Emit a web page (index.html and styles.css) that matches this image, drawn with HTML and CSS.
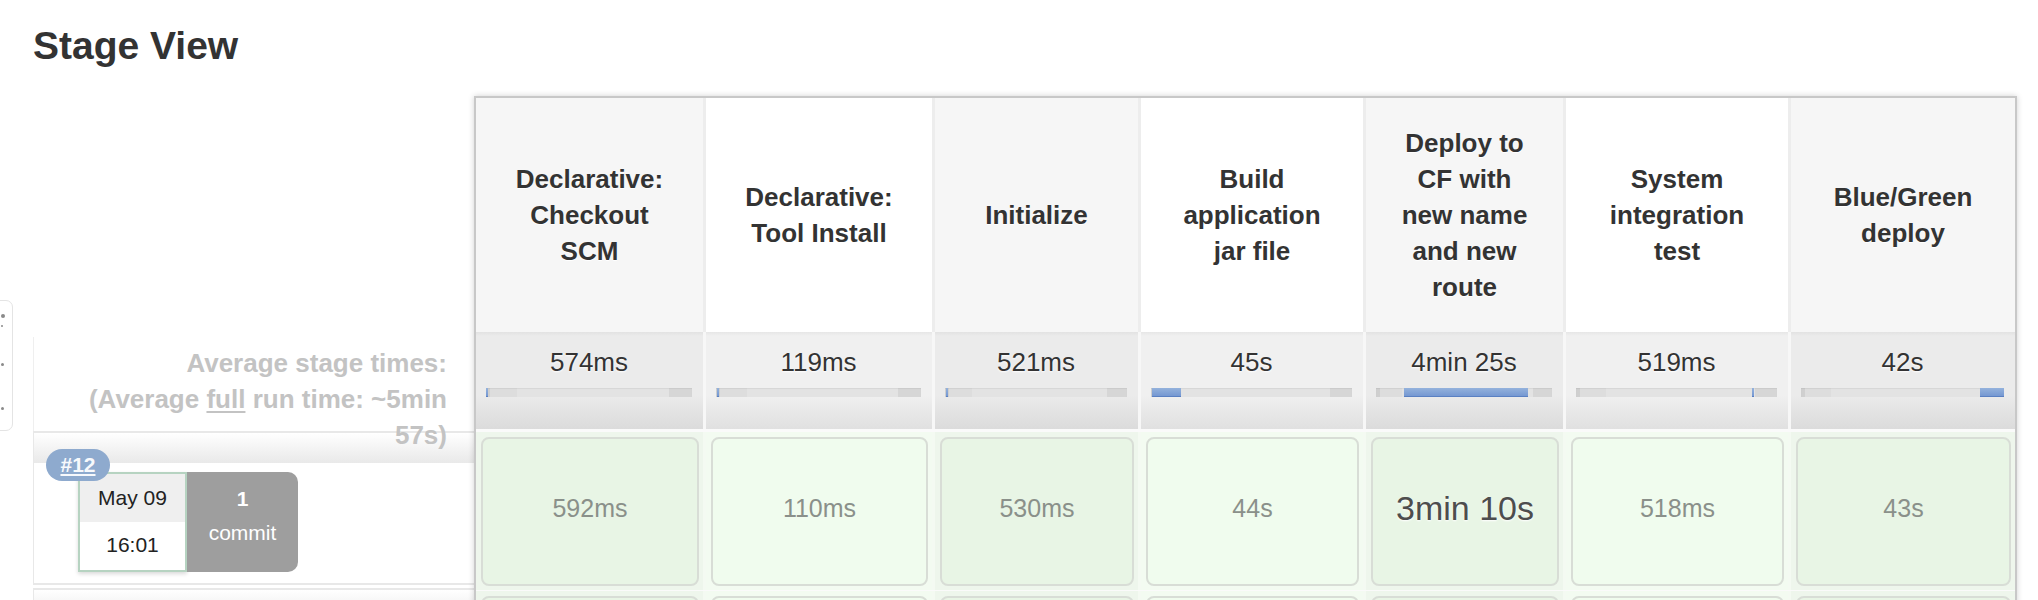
FILE: index.html
```html
<!DOCTYPE html>
<html>
<head>
<meta charset="utf-8">
<title>Stage View</title>
<link rel="stylesheet" href="styles.css">
</head>
<body>
<div class="handle">
  <span class="dot d1"></span><span class="dot d2"></span><span class="dot d3"></span><span class="dot d4"></span>
</div>
<div class="page">
  <h2 class="title">Stage View</h2>
  <div class="stage-view">
    <div class="labels">
      <div class="labels-head"></div>
      <div class="avg-label">Average stage times:<br>(Average <u>full</u> run time: ~5min 57s)</div>
      <div class="run">
        <div class="run-card">
          <div class="date">
            <div class="day">May 09</div>
            <div class="time">16:01</div>
          </div>
          <div class="commit"><b>1</b><span>commit</span></div>
          <a class="badge">#12</a>
        </div>
      </div>
      <div class="run"></div>
    </div>

    <div class="stages">
      <div class="row head">
        <div class="c">Declarative: Checkout SCM</div>
        <div class="c">Declarative: Tool Install</div>
        <div class="c">Initialize</div>
        <div class="c">Build application jar file</div>
        <div class="c">Deploy to CF with new name and new route</div>
        <div class="c">System integration test</div>
        <div class="c">Blue/Green deploy</div>
      </div>
      <div class="row avg">
        <div class="c">574ms<div class="bar"><span class="fill" style="left:0%;width:0.6%"></span></div></div>
        <div class="c">119ms<div class="bar"><span class="fill" style="left:0.3%;width:0.5%"></span></div></div>
        <div class="c">521ms<div class="bar"><span class="fill" style="left:0.6%;width:0.5%"></span></div></div>
        <div class="c">45s<div class="bar"><span class="fill" style="left:0.5%;width:14.5%"></span></div></div>
        <div class="c">4min 25s<div class="bar"><span class="fill" style="left:15.7%;width:70.8%"></span></div></div>
        <div class="c">519ms<div class="bar"><span class="fill" style="left:87.6%;width:0.6%"></span></div></div>
        <div class="c">42s<div class="bar"><span class="fill" style="left:88.3%;width:11.7%"></span></div></div>
      </div>
      <div class="row build">
        <div class="c"><div class="box">592ms</div></div>
        <div class="c"><div class="box">110ms</div></div>
        <div class="c"><div class="box">530ms</div></div>
        <div class="c"><div class="box">44s</div></div>
        <div class="c"><div class="box long">3min 10s</div></div>
        <div class="c"><div class="box">518ms</div></div>
        <div class="c"><div class="box">43s</div></div>
      </div>
      <div class="row build">
        <div class="c"><div class="box"></div></div>
        <div class="c"><div class="box"></div></div>
        <div class="c"><div class="box"></div></div>
        <div class="c"><div class="box"></div></div>
        <div class="c"><div class="box"></div></div>
        <div class="c"><div class="box"></div></div>
        <div class="c"><div class="box"></div></div>
      </div>
    </div>
  </div>
</div>
</body>
</html>
```

FILE: styles.css
```css
* { box-sizing: border-box; }
html, body { margin: 0; padding: 0; background: #fff; }
body {
  font-family: "Liberation Sans", Arial, Helvetica, sans-serif;
  color: #333;
  width: 2038px;
  height: 600px;
  overflow: hidden;
  position: relative;
}

/* collapsed side handle at the left edge */
.handle {
  position: absolute;
  left: -8px;
  top: 300px;
  width: 21px;
  height: 131px;
  border: 1px solid #e4e4e4;
  border-radius: 7px;
}
.dot {
  position: absolute;
  left: 8px;
  width: 3px;
  height: 3px;
  border-radius: 50%;
  background: #8a8a8a;
}
.d1 { top: 13px; width: 4px; height: 4px; }
.d2 { top: 24px; width: 2px; height: 2px; }
.d3 { top: 62px; }
.d4 { top: 106px; }

.page { padding: 24px 0 0 33px; }
.title {
  margin: 0;
  font-size: 39px;
  line-height: 44px;
  font-weight: bold;
  color: #333;
}

.stage-view {
  display: flex;
  align-items: flex-start;
  margin-top: 28px;
}

/* left label column */
.labels { flex: none; width: 441px; }
.labels-head { height: 241px; }
.avg-label {
  height: 94px;
  border-left: 1px solid #efefef;
  padding: 8px 27px 0 30px;
  text-align: right;
  font-size: 26px;
  line-height: 36px;
  font-weight: bold;
  color: #c3c3c3;
}
.avg-label u { text-decoration-thickness: 2px; text-underline-offset: 3px; }

.run {
  height: 154px;
  border-top: 2px solid #e8e8e8;
  border-bottom: 2px solid #e8e8e8;
  border-left: 1px solid #e8e8e8;
  background: #fff linear-gradient(#ffffff, #e9e9e9) no-repeat;
  background-size: 100% 30px;
  padding: 39px 0 0 44px;
  margin-bottom: 3px;
}
.run-card {
  position: relative;
  display: flex;
  width: 220px;
}
.date {
  width: 109px;
  height: 100px;
  border: 2px solid #b6d3c1;
  background: #fff;
  box-shadow: 0 2px 4px rgba(0, 0, 0, 0.15);
  display: flex;
  flex-direction: column;
  font-size: 21px;
  color: #222;
  text-align: center;
}
.day { height: 48px; line-height: 48px; background: #efefef; }
.time { flex: 1; line-height: 46px; }
.commit {
  width: 111px;
  height: 100px;
  background: #9e9e9e;
  border-radius: 0 10px 10px 0;
  color: #fff;
  font-size: 21px;
  line-height: 34px;
  text-align: center;
  padding-top: 10px;
  display: flex;
  flex-direction: column;
}
.badge {
  position: absolute;
  top: -23px;
  left: -32px;
  width: 64px;
  height: 32px;
  border-radius: 16px;
  background: #8eaace;
  color: #f7f9fc;
  font-weight: bold;
  font-size: 21px;
  line-height: 32px;
  text-align: center;
  text-decoration: underline;
  text-decoration-thickness: 2px;
  text-underline-offset: 2px;
}

/* stage table */
.stages {
  flex: none;
  width: 1543px;
  border: 2px solid #c8c8c8;
  border-bottom: none;
  box-shadow: 0 0 6px rgba(0, 0, 0, 0.18);
  background: #fafafa;
}
.row { display: flex; gap: 3px; }
.row > .c { flex: none; }
.row > .c:nth-child(1) { width: 227px; }
.row > .c:nth-child(2) { width: 226px; }
.row > .c:nth-child(3) { width: 203px; }
.row > .c:nth-child(4) { width: 222px; }
.row > .c:nth-child(5) { width: 197px; }
.row > .c:nth-child(6) { width: 222px; }
.row > .c:nth-child(7) { width: 224px; }

.head { height: 234px; background: #ededed; }
.head .c {
  display: flex;
  align-items: center;
  justify-content: center;
  text-align: center;
  padding: 0 26px;
  font-weight: bold;
  font-size: 26px;
  line-height: 36px;
  color: #333;
  text-shadow: 0 1px 0 #fff;
}
.head .c:nth-child(odd) { background: #f6f6f6; }
.head .c:nth-child(even) { background: #fff; }

.avg { height: 97px; background: #f7f7f7; margin-bottom: 3px; }
.avg .c {
  padding: 14px 11px 0 10px;
  text-align: center;
  font-size: 26px;
  line-height: 32px;
  color: #333;
  text-shadow: 0 1px 2px #fff;
}
.avg .c:nth-child(odd) { background: linear-gradient(#e2e2e2, #ebebeb 4px, #ebebeb 65%, #dbdbdb); }
.avg .c:nth-child(even) { background: linear-gradient(#e6e6e6, #f0f0f0 4px, #f0f0f0 65%, #e0e0e0); }

.bar {
  position: relative;
  margin-top: 10px;
  height: 9px;
  background: linear-gradient(to right, #cfcfcf 0, #cfcfcf 4px, #dddddd 4px, #dddddd 15%, #e3e3e3 15%, #e3e3e3 89%, #d6d6d6 89%);
  box-shadow: inset 0 1px 1px rgba(0, 0, 0, 0.06);
}
.fill {
  position: absolute;
  top: 0;
  bottom: 0;
  min-width: 2px;
  background: linear-gradient(#94b2dc, #7598d2);
  border-bottom: 1px solid #5a80c2;
}

.build { height: 158px; background: #f4faf2; margin-bottom: 1px; }
.build .c { padding: 5px 4px 4px 5px; }
.build .c:nth-child(odd) { background: #eef6ec; }
.build .c:nth-child(even) { background: #f3fbf1; }
.box {
  height: 100%;
  border: 2px solid #d8ddd6;
  border-radius: 8px;
  display: flex;
  align-items: center;
  justify-content: center;
  padding-bottom: 6px;
  font-size: 25px;
  color: #8a908a;
}
.build .c:nth-child(odd) .box { background: #e8f5e5; }
.build .c:nth-child(even) .box { background: #f0fcee; }
.box.long { font-size: 34px; color: #4d4d4d; text-shadow: 0 1px 2px #fff; }
```
